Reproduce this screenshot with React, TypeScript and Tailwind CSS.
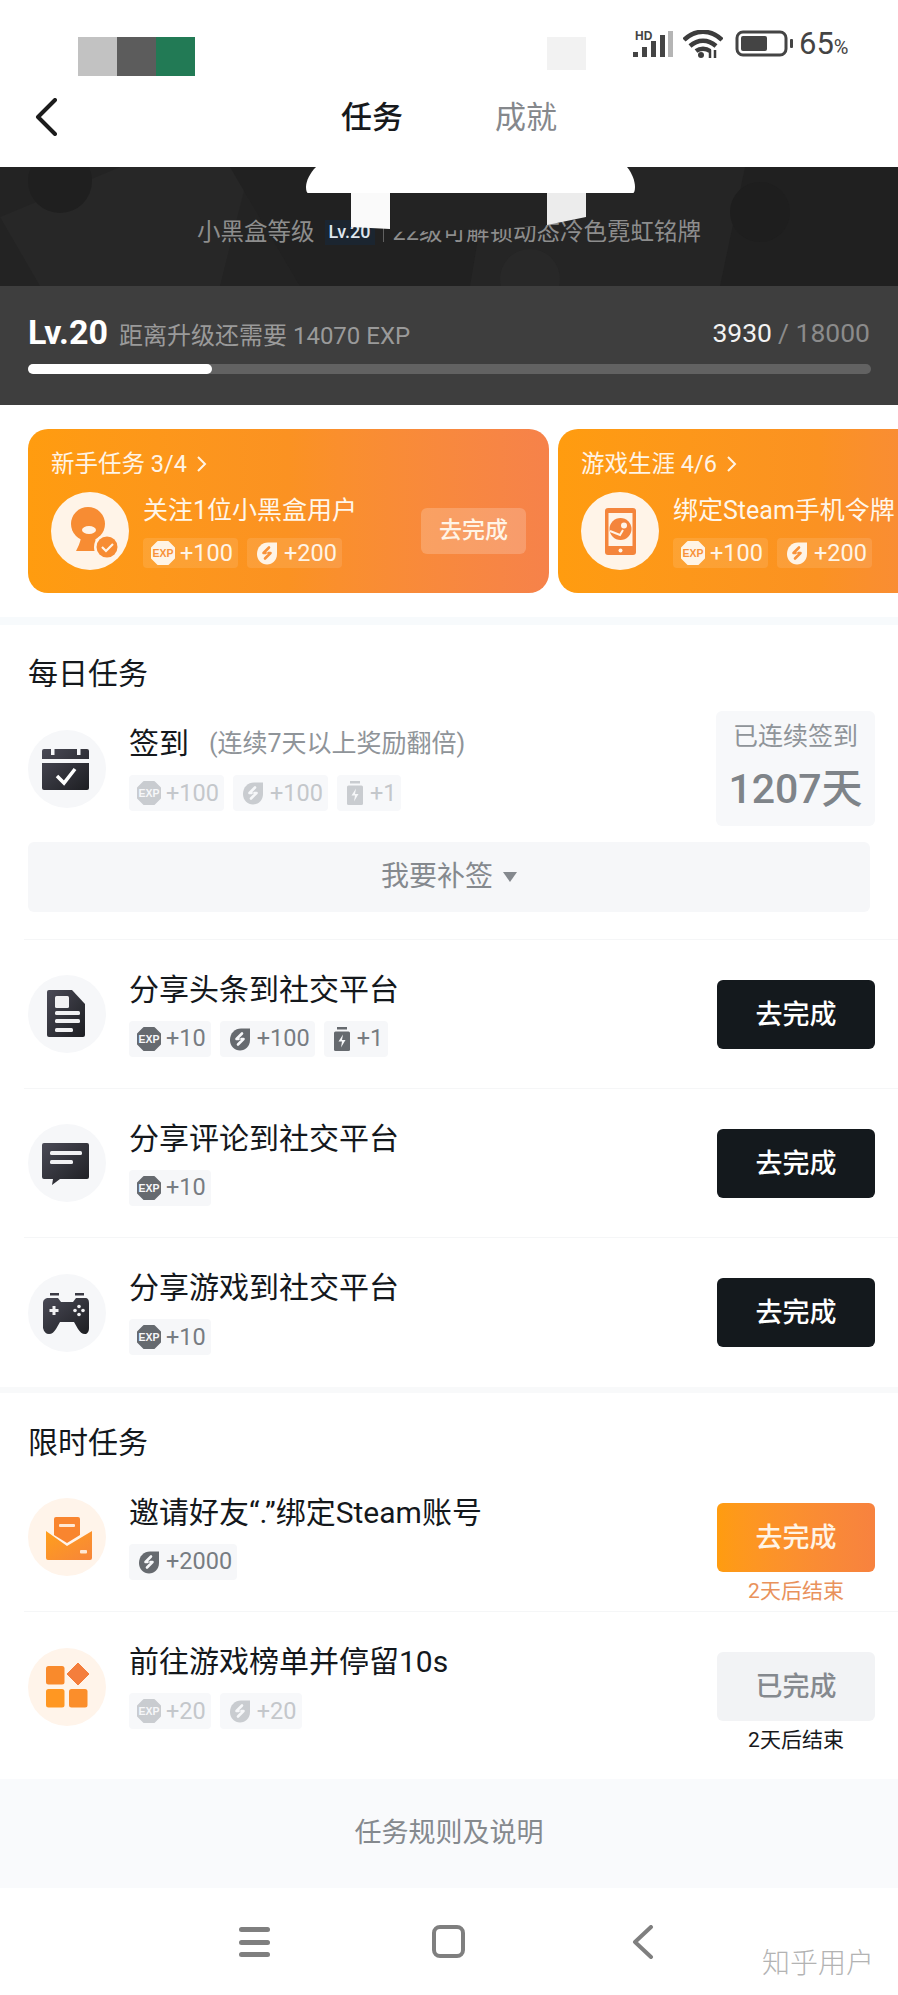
import type { ReactNode } from "react";

type Tone = "active" | "muted" | "card";

const toneColors: Record<Tone, { icon: string; inner: string }> = {
  active: { icon: "#666a6f", inner: "#f6f7f9" },
  muted: { icon: "#c9ccd0", inner: "#f6f7f9" },
  card: { icon: "#fff4e6", inner: "#f8923a" },
};

function ExpIcon({ tone }: { tone: Tone }) {
  const c = toneColors[tone];
  return (
    <svg width="26" height="26" viewBox="0 0 26 26" className="shrink-0">
      <path d="M8 2h10l6 6v10l-6 6H8l-6-6V8z" fill={c.icon} stroke={c.icon} strokeWidth="2" strokeLinejoin="round" />
      <text x="13" y="17" textAnchor="middle" fontSize="11" fontWeight="700" fontFamily="Liberation Sans, sans-serif" fill={c.inner} textLength="21" lengthAdjust="spacingAndGlyphs">
        EXP
      </text>
    </svg>
  );
}

function CoinIcon({ tone }: { tone: Tone }) {
  const c = toneColors[tone];
  return (
    <svg width="26" height="26" viewBox="0 0 26 26" className="shrink-0">
      <path d="M3 14C3 7 8 2.500 14 2.500h9V14c0 6-4.500 10.500-10 10.500S3 20 3 14z" fill={c.icon} />
      <path d="M15 7.500l-5.500 5.500h2M11 18.500l5.500-5.500h-2" fill="none" stroke={c.inner} strokeWidth="2.600" strokeLinecap="round" strokeLinejoin="round" />
    </svg>
  );
}

function BatteryIcon({ tone }: { tone: Tone }) {
  const c = toneColors[tone];
  return (
    <svg width="22" height="26" viewBox="0 0 22 26" className="shrink-0">
      <rect x="6" y="1" width="10" height="2.500" fill={c.icon} />
      <rect x="3" y="5.500" width="16" height="19.500" rx="1.500" fill={c.icon} />
      <path d="M12 8.500l-4.500 7h3.500l-1 6 4.500-7.500h-3.500z" fill={c.inner} />
    </svg>
  );
}

function Chip({ tone, kind, value }: { tone: Tone; kind: "exp" | "coin" | "battery"; value: string }) {
  const box =
    tone === "card"
      ? "h-[30px] bg-[#ffffff1c] text-[#fff4e6]"
      : tone === "active"
        ? "h-[36px] bg-[#f6f7f9] text-[#777c82]"
        : "h-[36px] bg-[#f7f8fa] text-[#c4c7cb]";
  return (
    <div className={`flex items-center gap-[4px] rounded-[4px] pl-[7px] pr-[5px] text-[23.5px] leading-none ${box}`}>
      {kind === "exp" && <ExpIcon tone={tone} />}
      {kind === "coin" && <CoinIcon tone={tone} />}
      {kind === "battery" && <BatteryIcon tone={tone} />}
      <span className="pt-[1px]">{value}</span>
    </div>
  );
}

function IconCircle({ warm, children }: { warm?: boolean; children: ReactNode }) {
  return (
    <div className={`h-[78px] w-[78px] shrink-0 rounded-full ${warm ? "bg-[#fff4ea]" : "bg-[#f6f7f9]"}`}>
      <svg width="78" height="78" viewBox="0 0 78 78">
        <defs>
          <linearGradient id="darkIcon" x1="0" y1="0" x2="1" y2="1">
            <stop offset="0" stopColor="#4a4a56" />
            <stop offset="1" stopColor="#1d1e22" />
          </linearGradient>
          <linearGradient id="warmIcon" x1="0" y1="0" x2="1" y2="1">
            <stop offset="0" stopColor="#ff9f1c" />
            <stop offset="1" stopColor="#f7853a" />
          </linearGradient>
        </defs>
        {children}
      </svg>
    </div>
  );
}

const CalendarGlyph = (
  <>
    <rect x="14" y="19" width="47" height="41" rx="2" fill="url(#darkIcon)" />
    <rect x="23" y="19" width="3.500" height="6" fill="#f6f7f9" />
    <rect x="49" y="19" width="3.500" height="6" fill="#f6f7f9" />
    <rect x="14" y="29" width="47" height="4" fill="#f6f7f9" />
    <path d="M29 46l7 7 11-14" fill="none" stroke="#fff" strokeWidth="3.500" />
  </>
);

const DocGlyph = (
  <>
    <path d="M21 15h23l13 14v31a2 2 0 0 1-2 2H21a2 2 0 0 1-2-2V17a2 2 0 0 1 2-2z" fill="url(#darkIcon)" />
    <rect x="27" y="21" width="14" height="12" rx="1.500" fill="#f1f1f3" />
    <rect x="27" y="36" width="25" height="4" rx="1.500" fill="#f1f1f3" />
    <rect x="27" y="44" width="25" height="4" rx="1.500" fill="#f1f1f3" />
    <rect x="27" y="53" width="18" height="4" rx="1.500" fill="#f1f1f3" />
  </>
);

const CommentGlyph = (
  <>
    <path d="M16 19h43a2 2 0 0 1 2 2v32a2 2 0 0 1-2 2H32l-8 6 1-6h-9a2 2 0 0 1-2-2V21a2 2 0 0 1 2-2z" fill="url(#darkIcon)" />
    <rect x="22" y="27" width="32" height="4" rx="1.500" fill="#f1f1f3" />
    <rect x="22" y="36" width="23" height="4" rx="1.500" fill="#f1f1f3" />
  </>
);

const PadGlyph = (
  <>
    <rect x="22" y="19" width="9" height="2.500" fill="#3a3a44" />
    <rect x="47" y="19" width="9" height="2.500" fill="#3a3a44" />
    <path d="M21 24h9l3 4h12l3-4h9c3 0 4 2 4 5v25c0 4-2 6-4 6-3 0-5-2-7-5l-4-7H32l-4 7c-2 3-4 5-7 5-3 0-5-2-6-6V29c0-3 2-5 6-5z" fill="url(#darkIcon)" />
    <path d="M26 32v9M21.500 36.500h9" stroke="#f1f1f3" strokeWidth="3" />
    <circle cx="51" cy="32.500" r="1.800" fill="#f1f1f3" />
    <circle cx="51" cy="40.500" r="1.800" fill="#f1f1f3" />
    <circle cx="47" cy="36.500" r="1.800" fill="#f1f1f3" />
    <circle cx="55" cy="36.500" r="1.800" fill="#f1f1f3" />
  </>
);

const MailGlyph = (
  <>
    <path d="M26 21a2 2 0 0 1 2-2h22a2 2 0 0 1 2 2v16L39 45l-13-8z" fill="#f9852f" />
    <rect x="31" y="26" width="16" height="3" rx="1" fill="#ffe8d4" />
    <path d="M18 33l21 15 25-15v27a2 2 0 0 1-2 2H20a2 2 0 0 1-2-2z" fill="url(#warmIcon)" />
    <rect x="52" y="52" width="7" height="3.500" rx="1" fill="#ffe8d4" />
  </>
);

const GridGlyph = (
  <>
    <rect x="18" y="18" width="18.500" height="18.500" rx="2.500" fill="#f98a2c" />
    <path d="M50 15l11 11-11 11-11-11z" fill="#f47e3c" stroke="#f47e3c" strokeWidth="1" strokeLinejoin="round" />
    <rect x="18" y="41" width="18.500" height="18.500" rx="2.500" fill="#ff9722" />
    <rect x="41" y="41" width="18.500" height="18.500" rx="2.500" fill="#fb8e2b" />
  </>
);

function ActionButton({ label, variant }: { label: string; variant: "dark" | "orange" | "done" }) {
  const look =
    variant === "dark"
      ? "bg-[#14191d] text-white"
      : variant === "orange"
        ? "bg-gradient-to-r from-[#ff9c0f] to-[#f7823f] text-[#fff4e6]"
        : "bg-[#f2f3f5] text-[#85898e]";
  return <div className={`flex h-[69px] w-[158px] items-center justify-center rounded-[6px] pt-[2px] text-[27px] font-medium leading-none ${look}`}>{label}</div>;
}

function TaskRow({
  glyph,
  warm,
  title,
  chips,
  action,
  last,
}: {
  glyph: ReactNode;
  warm?: boolean;
  title: string;
  chips: ReactNode;
  action: ReactNode;
  last?: boolean;
}) {
  return (
    <div className={`ml-[24px] flex h-[149px] items-center pl-[4px] pr-[23px] ${last ? "" : "border-b border-[#f5f6f7]"}`}>
      <IconCircle warm={warm}>{glyph}</IconCircle>
      <div className="ml-[23px] flex flex-col gap-[13px]">
        <div className="text-[30px] leading-[36px] text-[#14181c]">{title}</div>
        <div className="flex gap-[9px]">{chips}</div>
      </div>
      <div className="ml-auto h-[69px] w-[158px]">{action}</div>
    </div>
  );
}

function PromoCard({ title, task, glyph }: { title: string; task: string; glyph: ReactNode }) {
  return (
    <div className="h-[164px] w-[521px] shrink-0 rounded-[20px] bg-gradient-to-r from-[#ff9c0f] via-[#fb9222] to-[#f6824a] px-[23px] pt-[20px]">
      <div className="flex h-[30px] items-center gap-[9px] text-[23.5px] leading-[30px] text-[#fff4e6]">
        <span>{title}</span>
        <svg width="12" height="20" viewBox="0 0 12 20">
          <path d="M2 3l7 7-7 7" fill="none" stroke="#fff4e6" strokeWidth="2" />
        </svg>
      </div>
      <div className="mt-[13px] flex items-center">
        <div className="h-[78px] w-[78px] shrink-0 rounded-full bg-[#fff4e8]">
          <svg width="78" height="78" viewBox="0 0 78 78">
            {glyph}
          </svg>
        </div>
        <div className="ml-[14px] flex flex-col gap-[10px] whitespace-nowrap">
          <div className="text-[25px] leading-[34px] text-[#fff6ea]">{task}</div>
          <div className="flex gap-[9px]">
            <Chip tone="card" kind="exp" value="+100" />
            <Chip tone="card" kind="coin" value="+200" />
          </div>
        </div>
        <div className="ml-auto flex h-[46px] w-[105px] shrink-0 items-center justify-center rounded-[6px] bg-[#ffffff33] text-[23px] font-medium text-[#fff4e6]">去完成</div>
      </div>
    </div>
  );
}

export default function App() {
  return (
    <div className="relative h-[1995px] w-[898px] overflow-hidden bg-white font-['Roboto','Noto_Sans_CJK_SC',sans-serif]">
      {/* Status bar */}
      <div className="flex h-[84px] items-start pl-[78px] pt-[30px]">
        <div className="mt-[7px] h-[39px] w-[39px] bg-[#c2c2c2]" />
        <div className="mt-[7px] h-[39px] w-[39px] bg-[#5c5c5c]" />
        <div className="mt-[7px] h-[39px] w-[39px] bg-[#227a55]" />
        <div className="ml-[352px] mt-[7px] h-[33px] w-[39px] bg-[#f2f2f2]" />
        <svg width="40" height="28" viewBox="0 0 40 28" className="ml-[47px]">
          <text x="2" y="10" fontSize="12" fontWeight="700" fontFamily="Liberation Sans, sans-serif" fill="#444">
            HD
          </text>
          <rect x="0" y="22" width="5" height="5" fill="#444" />
          <rect x="9" y="17" width="5" height="10" fill="#444" />
          <rect x="18" y="11" width="5" height="16" fill="#444" />
          <rect x="27" y="5" width="5" height="22" fill="#444" />
          <rect x="35" y="1" width="5" height="26" fill="#b5b5b5" />
        </svg>
        <svg width="40" height="28" viewBox="0 0 40 28" className="ml-[10px]">
          <path d="M1 10c11-11 27-11 38 0M7 16c8-7 18-7 26 0M13 21c4-3 10-3 14 0" fill="none" stroke="#3c3c3c" strokeWidth="4.500" />
          <circle cx="18" cy="25" r="3" fill="#3c3c3c" />
          <path d="M27 20v8M32 20v8" stroke="#3c3c3c" strokeWidth="2.500" />
        </svg>
        <svg width="58" height="28" viewBox="0 0 58 28" className="ml-[12px]">
          <rect x="2" y="2" width="49" height="23" rx="6" fill="none" stroke="#444" strokeWidth="3" />
          <rect x="6" y="6" width="26" height="15" rx="2" fill="#444" />
          <rect x="55" y="9" width="3" height="9" rx="1" fill="#444" />
        </svg>
        <div className="ml-[6px] flex items-baseline leading-[28px] text-[#444]">
          <span className="text-[31px]">65</span>
          <span className="text-[20px]">%</span>
        </div>
      </div>

      {/* Tabs */}
      <div className="flex h-[66px] items-center pl-[35px]">
        <svg width="22" height="38" viewBox="0 0 22 38" className="shrink-0">
          <path d="M20 2L3 19l17 17" fill="none" stroke="#1c1c1c" strokeWidth="4" strokeLinecap="round" strokeLinejoin="round" />
        </svg>
        <div className="ml-[284px] text-[31px] font-medium leading-none text-[#17191c]">任务</div>
        <div className="ml-[92px] text-[31px] leading-none text-[#85888c]">成就</div>
      </div>
      <div className="h-[17px]" />

      {/* Level banner */}
      <div className="relative flex h-[119px] items-start justify-center overflow-hidden bg-[#232323] pt-[50px]">
        <svg width="898" height="119" viewBox="0 0 898 119" className="absolute left-0 top-0">
          <polygon points="0,50 120,0 250,0 220,119 40,119" fill="#272727" />
          <polygon points="230,0 490,0 470,119 300,119" fill="#212121" />
          <polygon points="490,0 760,0 735,119 470,119" fill="#252525" />
          <polygon points="745,0 898,0 898,119 720,119" fill="#202020" />
          <circle cx="60" cy="14" r="32" fill="#1f1f1f" />
          <circle cx="530" cy="112" r="30" fill="#282828" />
          <circle cx="760" cy="45" r="30" fill="#1e1e1e" />
        </svg>
        <div className="relative flex h-[30px] items-center whitespace-nowrap text-[23.5px] leading-[30px] text-[#8d8d8d]">
          <span>小黑盒等级</span>
          <span className="ml-[10px] flex h-[25px] w-[50px] items-center justify-center bg-[#1b2530] text-[18px] font-medium text-[#dfe6ee]">Lv.20</span>
          <span className="ml-[8px] h-[20px] w-px bg-[#606060]" />
          <span className="ml-[9px]">22级可解锁动态冷色霓虹铭牌</span>
        </div>
        {/* Redaction marks that sit over the banner */}
        <svg width="898" height="119" viewBox="0 0 898 119" className="absolute left-0 top-0">
          <polygon points="391,26 547,26 547,58 500,62 391,65" fill="#232323" />
          <path d="M316 0C310 6 306 14 306 20c0 4 1 6 2 6h325c1 0 2-2 2-6 0-6-3-14-8-20z" fill="#fff" />
          <polygon points="351,26 390,26 390,62 351,60" fill="#fafafa" />
          <polygon points="547,26 586,26 586,50 547,58" fill="#ececec" />
        </svg>
      </div>

      {/* Level progress */}
      <div className="h-[119px] bg-[#3e3e3e] px-[28px] pt-[28px]">
        <div className="flex h-[38px] items-center justify-between">
          <div className="flex items-baseline">
            <span className="text-[34px] font-bold leading-[38px] text-white">Lv.20</span>
            <span className="ml-[11px] text-[24px] text-[#9a9a9a]">距离升级还需要 14070 EXP</span>
          </div>
          <div className="flex items-baseline text-[26.5px]">
            <span className="text-[#f2f2f2]">3930</span>
            <span className="ml-[6px] text-[#8b8b8b]">/ 18000</span>
          </div>
        </div>
        <div className="mt-[12px] h-[10px] w-[843px] rounded-full bg-[#626262]">
          <div className="h-full w-[184px] rounded-full bg-white" />
        </div>
      </div>

      {/* Promo cards */}
      <div className="flex h-[212px] gap-[9px] overflow-hidden pl-[28px] pt-[24px]">
        <PromoCard
          title="新手任务 3/4"
          task="关注1位小黑盒用户"
          glyph={
            <>
              <circle cx="37" cy="32" r="17" fill="#f78c33" />
              <path d="M30 46h14l3 13H25c2-4 4-8 5-13z" fill="#f78c33" />
              <ellipse cx="38" cy="38" rx="7" ry="4" fill="#fff4e8" />
              <circle cx="56" cy="55" r="13" fill="#fff4e8" />
              <circle cx="56" cy="55" r="10.500" fill="#f78c33" />
              <path d="M51 55l4 4 7-7" fill="none" stroke="#fff4e8" strokeWidth="2.200" />
            </>
          }
        />
        <PromoCard
          title="游戏生涯 4/6"
          task="绑定Steam手机令牌"
          glyph={
            <>
              <rect x="24" y="16" width="31" height="47" rx="3" fill="#f4853c" />
              <rect x="27.500" y="21" width="24" height="33" fill="#fff4e8" />
              <circle cx="39.500" cy="37" r="11" fill="#f4853c" />
              <circle cx="43" cy="33.500" r="3" fill="#fff4e8" />
              <path d="M29 39l10 4 3-5" fill="none" stroke="#fff4e8" strokeWidth="2" />
              <circle cx="39.500" cy="58.500" r="2" fill="#fff4e8" />
            </>
          }
        />
      </div>

      <div className="h-[8px] bg-[#f7fafc]" />

      {/* Daily tasks */}
      <div className="px-[28px] pt-[29px] text-[30px] leading-[40px] text-[#14181c]">每日任务</div>
      <div className="mt-[17px] flex h-[115px] items-center pl-[28px] pr-[23px]">
        <IconCircle>{CalendarGlyph}</IconCircle>
        <div className="ml-[23px] flex flex-col gap-[13px]">
          <div className="flex items-center leading-[36px]">
            <span className="text-[30px] text-[#14181c]">签到</span>
            <span className="ml-[20px] text-[25px] text-[#8f9499]">(连续7天以上奖励翻倍)</span>
          </div>
          <div className="flex gap-[9px]">
            <Chip tone="muted" kind="exp" value="+100" />
            <Chip tone="muted" kind="coin" value="+100" />
            <Chip tone="muted" kind="battery" value="+1" />
          </div>
        </div>
        <div className="ml-auto flex h-[115px] w-[159px] flex-col items-center rounded-[6px] bg-[#f7f8fa] pt-[11px]">
          <div className="text-[25px] leading-[30px] text-[#8f9499]">已连续签到</div>
          <div className="mt-[12px] text-[41px] font-medium leading-[50px] text-[#7f8489]">1207天</div>
        </div>
      </div>
      <div className="ml-[28px] mt-[16px] flex h-[70px] w-[842px] items-center justify-center gap-[10px] rounded-[6px] bg-[#f6f7f9] text-[28px] text-[#85898e]">
        <span>我要补签</span>
        <svg width="14" height="12" viewBox="0 0 14 12">
          <path d="M0 1h14L7 11z" fill="#85898e" />
        </svg>
      </div>
      <div className="ml-[24px] mt-[27px] h-px bg-[#f5f6f7]" />

      <TaskRow
        glyph={DocGlyph}
        title="分享头条到社交平台"
        chips={
          <>
            <Chip tone="active" kind="exp" value="+10" />
            <Chip tone="active" kind="coin" value="+100" />
            <Chip tone="active" kind="battery" value="+1" />
          </>
        }
        action={<ActionButton label="去完成" variant="dark" />}
      />
      <TaskRow
        glyph={CommentGlyph}
        title="分享评论到社交平台"
        chips={<Chip tone="active" kind="exp" value="+10" />}
        action={<ActionButton label="去完成" variant="dark" />}
      />
      <TaskRow
        last
        glyph={PadGlyph}
        title="分享游戏到社交平台"
        chips={<Chip tone="active" kind="exp" value="+10" />}
        action={<ActionButton label="去完成" variant="dark" />}
      />

      <div className="h-[6px] bg-[#f8f9fa]" />

      {/* Limited-time tasks */}
      <div className="px-[28px] pt-[30px] text-[30px] leading-[40px] text-[#14181c]">限时任务</div>
      <TaskRow
        warm
        glyph={MailGlyph}
        title="邀请好友“.”绑定Steam账号"
        chips={<Chip tone="active" kind="coin" value="+2000" />}
        action={
          <>
            <ActionButton label="去完成" variant="orange" />
            <div className="mt-[5px] text-center text-[21px] leading-[28px] text-[#e9925c]">2天后结束</div>
          </>
        }
      />
      <TaskRow
        last
        warm
        glyph={GridGlyph}
        title="前往游戏榜单并停留10s"
        chips={
          <>
            <Chip tone="muted" kind="exp" value="+20" />
            <Chip tone="muted" kind="coin" value="+20" />
          </>
        }
        action={
          <>
            <ActionButton label="已完成" variant="done" />
            <div className="mt-[5px] text-center text-[21px] leading-[28px] text-[#17191c]">2天后结束</div>
          </>
        }
      />

      {/* Rules link */}
      <div className="mt-[18px] flex h-[109px] items-center justify-center bg-[#f9fafc] text-[27px] text-[#85898e]">任务规则及说明</div>

      {/* System nav bar */}
      <div className="flex h-[108px] items-start pl-[239px] pt-[37px]">
        <div className="mt-[2px] flex h-[30px] w-[31px] flex-col justify-between">
          <div className="h-[5px] rounded-sm bg-[#7f7f7f]" />
          <div className="h-[5px] rounded-sm bg-[#7f7f7f]" />
          <div className="h-[5px] rounded-sm bg-[#7f7f7f]" />
        </div>
        <div className="ml-[162px] h-[33px] w-[33px] rounded-[8px] border-[4px] border-[#7f7f7f]" />
        <svg width="22" height="34" viewBox="0 0 22 34" className="ml-[167px]">
          <path d="M19 2L3 17l16 15" fill="none" stroke="#7f7f7f" strokeWidth="4" strokeLinecap="round" strokeLinejoin="round" />
        </svg>
      </div>

      {/* Watermark over the nav bar */}
      <div className="absolute left-[762px] top-[1948px] text-[28px] font-light leading-[32px] text-[#b3b3b3]">知乎用户</div>
    </div>
  );
}
